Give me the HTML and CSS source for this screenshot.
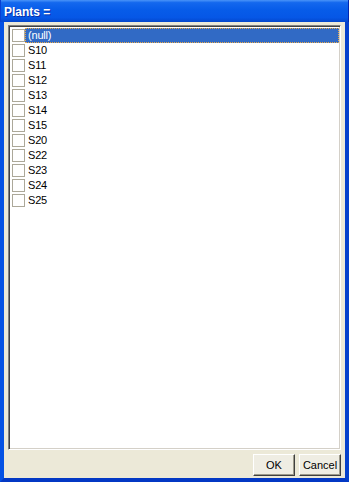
FILE: index.html
```html
<!DOCTYPE html>
<html lang="en">
<head>
    <meta charset="UTF-8">
    <meta name="viewport" content="width=device-width, initial-scale=1.0">
    <title>Plants =</title>
    <link rel="stylesheet" href="styles.css">
</head>
<body>
    <div class="window">
        <div class="titlebar">Plants =</div>

        <div class="window-body">
            <div class="check-list">
                <label class="check-item selected">
                    <span class="check-box"></span>
                    <span class="check-label">(null)</span>
                </label>
                <label class="check-item"><span class="check-box"></span><span class="check-label">S10</span></label>
                <label class="check-item"><span class="check-box"></span><span class="check-label">S11</span></label>
                <label class="check-item"><span class="check-box"></span><span class="check-label">S12</span></label>
                <label class="check-item"><span class="check-box"></span><span class="check-label">S13</span></label>
                <label class="check-item"><span class="check-box"></span><span class="check-label">S14</span></label>
                <label class="check-item"><span class="check-box"></span><span class="check-label">S15</span></label>
                <label class="check-item"><span class="check-box"></span><span class="check-label">S20</span></label>
                <label class="check-item"><span class="check-box"></span><span class="check-label">S22</span></label>
                <label class="check-item"><span class="check-box"></span><span class="check-label">S23</span></label>
                <label class="check-item"><span class="check-box"></span><span class="check-label">S24</span></label>
                <label class="check-item"><span class="check-box"></span><span class="check-label">S25</span></label>
            </div>

            <div class="button-row">
                <button class="dlg-btn">OK</button>
                <button class="dlg-btn">Cancel</button>
            </div>
        </div>
    </div>
</body>
</html>
```

FILE: styles.css
```css
* {
    margin: 0;
    padding: 0;
    box-sizing: border-box;
}

body {
    font-family: "Liberation Sans", Arial, sans-serif;
    font-size: 11px;
    color: #000;
    background: #ece9d8;
}

.window {
    width: 349px;
    height: 482px;
    display: flex;
    flex-direction: column;
}

.titlebar {
    height: 22px;
    padding: 2px 0 0 3px;
    line-height: 20px;
    font-size: 12px;
    font-weight: bold;
    color: #fff;
    text-shadow: 1px 1px 0 #0a2fa8;
    background: linear-gradient(180deg, #4a94f8 0%, #1468ee 12%, #075ce9 45%, #0657e6 80%, #0446cc 100%);
    border-left: 1px solid #0840d4;
    border-right: 1px solid #0026b0;
}

.window-body {
    flex: 1;
    display: flex;
    flex-direction: column;
    gap: 4px;
    padding: 3px 4px 2px 4px;
    background: #ece9d8;
    border-left: 4px solid #0552e4;
    border-right: 4px solid #0440cc;
    border-bottom: 4px solid #0338c4;
}

.check-list {
    flex: 1;
    background: #fff;
    border-top: 1px solid #808080;
    border-left: 1px solid #808080;
    border-right: 1px solid #fff;
    border-bottom: 1px solid #fff;
    box-shadow: inset 1px 1px 0 #404040, inset -1px -1px 0 #d4d0c8;
    padding: 2px 1px 0 1px;
}

.check-item {
    display: flex;
    align-items: center;
    height: 15px;
    padding-left: 2px;
}

.check-box {
    width: 13px;
    height: 13px;
    border: 1px solid #aca899;
    background: #fff;
    flex-shrink: 0;
}

.check-label {
    flex: 1;
    height: 15px;
    padding-left: 2px;
    letter-spacing: -0.2px;
    border: 1px solid transparent;
    line-height: 13px;
}

.selected .check-label {
    background: #316ac5;
    color: #fff;
    border: 1px dotted #e9a94a;
}

.button-row {
    display: flex;
    justify-content: flex-end;
    gap: 4px;
}

.dlg-btn {
    width: 42px;
    height: 22px;
    font-family: "Liberation Sans", Arial, sans-serif;
    font-size: 11px;
    color: #000;
    background: #efede3;
    border-top: 1px solid #fff;
    border-left: 1px solid #fff;
    border-right: 1px solid #404040;
    border-bottom: 1px solid #404040;
    box-shadow: inset -1px -1px 0 #9d9a8c;
    cursor: pointer;
}
```
